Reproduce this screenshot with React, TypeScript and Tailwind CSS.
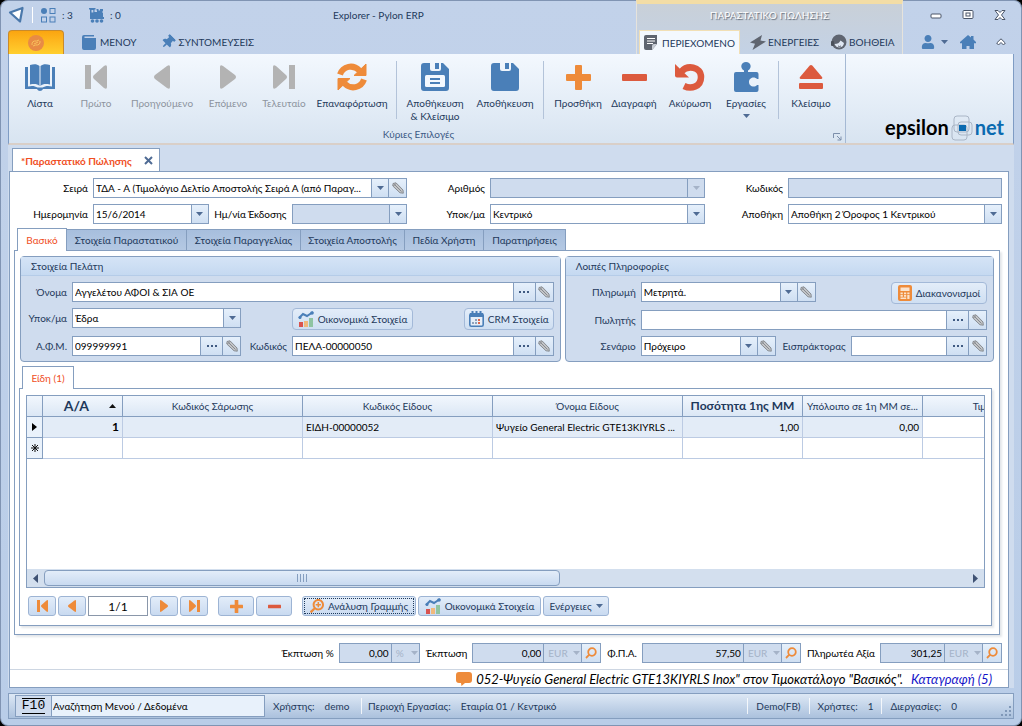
import React from 'react';
import { FaSearchPlus, FaThumbtack, FaUser } from 'react-icons/fa';

type IconProps = { className?: string };

const BookIcon = () => (
  <svg width="30" height="27" viewBox="0 0 30 27" fill="#4a7fb8">
    <path d="M5 1c4-1 7-1 9.500 1v20c-2-2-5-2.500-9.500-1.500zM25 1c-4-1-7-1-9.500 1v20c2-2 5-2.500 9.500-1.500z" />
    <path d="M0 3h3v19.500c4-1 7-.5 9.500 1h5c2.500-1.500 5.500-2 9.500-1V3h3v22H18c-1 2.500-5 2.500-6 0H0z" />
  </svg>
);

const FirstIcon = () => (
  <svg width="22" height="24" viewBox="0 0 22 24" fill="currentColor">
    <path d="M0 0h6v24H0zM22 2v20q0 3-3 1L9 14q-2-2 0-4L19 1q3-2 3 1z" />
  </svg>
);

const PrevIcon = () => (
  <svg width="16" height="24" viewBox="0 0 16 24" fill="currentColor">
    <path d="M16 2v20q0 3-3 1L1 14q-2-2 0-4L13 1q3-2 3 1z" />
  </svg>
);

const NextIcon = () => (
  <svg width="16" height="24" viewBox="0 0 16 24" fill="currentColor">
    <path d="M0 2v20q0 3 3 1l12-9q2-2 0-4L3 1Q0-1 0 2z" />
  </svg>
);

const LastIcon = () => (
  <svg width="22" height="24" viewBox="0 0 22 24" fill="currentColor">
    <path d="M16 0h6v24h-6zM0 2v20q0 3 3 1l10-9q2-2 0-4L3 1Q0-1 0 2z" />
  </svg>
);

const RefreshIcon = () => (
  <svg width="30" height="28" viewBox="0 0 30 28">
    <path d="M3 11.500C6 3 16 1 22.500 7.500M27 16.500C24 25 14 27 7.500 20.500" fill="none" stroke="#ee8b3a" strokeWidth="6" />
    <path d="M29 1v11.500H17zM1 27V15.500h12z" fill="#ee8b3a" stroke="#ee8b3a" strokeLinejoin="round" />
  </svg>
);

const SaveIcon = ({ lines = false }: { lines?: boolean }) => (
  <svg width="28" height="28" viewBox="0 0 28 28" fill="#4a7fb8">
    <path fillRule="evenodd" d="M3 0h6v6q0 2 2 2h7q2 0 2-2V0h2l6 6v19q0 3-3 3H3q-3 0-3-3V3Q0 0 3 0zM14 0h4v6h-4z" />
    {lines && (
      <>
        <rect x="4" y="12" width="20" height="12" rx="1.500" fill="#f3f8fe" />
        <path d="M9 15h10v2H9zM9 19h10v2H9z" />
      </>
    )}
  </svg>
);

const PlusIcon = ({ className }: IconProps) => (
  <svg className={className} viewBox="0 0 25 25" fill="#ee8b3a">
    <rect x="9" width="7" height="25" rx="1" />
    <rect y="9" width="25" height="7" rx="1" />
  </svg>
);

const MinusIcon = ({ className }: IconProps) => (
  <svg className={className} viewBox="0 0 25 25" fill="#dc5a3e">
    <rect y="9" width="25" height="7" rx="1" />
  </svg>
);

const UndoIcon = () => (
  <svg width="30" height="28" viewBox="0 0 30 28">
    <path d="M6.500 8.500C12 2 26 3 26 14c0 10-10 12.500-17 9" fill="none" stroke="#dc5a3e" strokeWidth="6.500" />
    <path d="M0 1l14 13.500H2q-2 0-2-2z" fill="#dc5a3e" />
  </svg>
);

const PuzzleIcon = () => (
  <svg width="25" height="30" viewBox="0 0 25 30" fill="#4a7fb8">
    <path d="M10 10V8.500C5.500 6 7 0 12 0s6.500 6 2 8.500V10h8.500q2 0 2 2v5h-1.500c-2.500-3-8-1.500-8 3s5.500 6 8 3h1.500v5q0 2-2 2H2q-2 0-2-2V12q0-2 2-2z" />
  </svg>
);

const EjectIcon = () => (
  <svg width="24" height="24" viewBox="0 0 24 24" fill="#dc5a3e">
    <path d="M10.500.8q1.500-1.500 3 0L23 12q1 2-1 2H2q-2 0-1-2z" />
    <rect y="18" width="24" height="6" rx="1" />
  </svg>
);

const PencilIcon = () => (
  <svg width="12" height="12" viewBox="0 0 12 12">
    <path d="M1 1.500L4 .8l7 7.200.3 3.200L8 10.800.8 4z" fill="#c3c5c8" stroke="#777b80" strokeWidth="0.800" />
    <path d="M2.500 2.500l7 7M1.500 4L4 1.500" stroke="#777b80" strokeWidth="0.800" />
  </svg>
);

const ChartIcon = () => (
  <svg width="16" height="16" viewBox="0 0 16 16">
    <path d="M1 11h4v5H1z" fill="#d9534f" />
    <path d="M6 10h4v6H6z" fill="#f0b97d" />
    <path d="M11 7h4v9h-4z" fill="#8fc4a2" />
    <path d="M1 7l4-4 4 2 6-4" fill="none" stroke="#4a7fb8" strokeWidth="2" />
    <circle cx="2" cy="6.500" r="1.500" fill="#4a7fb8" />
    <circle cx="14" cy="2" r="1.800" fill="#4a7fb8" />
  </svg>
);

const CalendarIcon = () => (
  <svg width="15" height="16" viewBox="0 0 15 16">
    <rect x=".8" y="2.800" width="13.400" height="12.400" rx="1.500" fill="#e6eef8" stroke="#4a7fb8" strokeWidth="1.600" />
    <path d="M1 2h13v4H1zM2.500 0h2v3h-2zM6.500 0h2v3h-2zM10.500 0h2v3h-2z" fill="#4a7fb8" />
    <path d="M6 8h2v2H6zM3 11h2v2H3zM6 11h2v2H6z" fill="#8fa3bd" />
    <path d="M9 8h2v2H9zM9 11h2v2H9z" fill="#e0674a" />
  </svg>
);

const CalculatorIcon = () => (
  <svg width="14" height="16" viewBox="0 0 14 16">
    <rect width="14" height="16" rx="2" fill="#ee8b3a" />
    <path d="M2.500 2.500h9V6h-9zM2.500 7.500h2.300v1.700H2.500zM6 7.500h2.200v1.700H6zM9.300 7.500h2.200v1.700H9.300zM2.500 10h2.300v1.700H2.500zM6 10h2.200v1.700H6zM9.300 10h2.200v4H9.300zM2.500 12.500h5.700V14H2.500z" fill="#fbe3cd" />
  </svg>
);

const HomeIcon = () => (
  <svg width="16" height="14" viewBox="0 0 16 14" fill="#4a7fb8">
    <path d="M8 0l3 2.600V1h2.500v3.500L16 7v1.200h-2V14H9.500v-3h-3v3H2V8.200H0V7z" />
  </svg>
);

const SpeechIcon = () => (
  <svg width="16" height="14" viewBox="0 0 16 14" className="mr-1 shrink-0" fill="#ee8b3a">
    <path d="M3 0h10q3 0 3 3v5q0 3-3 3H9l-3.500 3L5 11H3q-3 0-3-3V3q0-3 3-3z" />
  </svg>
);

const TrainIcon = () => (
  <svg width="15" height="15" viewBox="0 0 15 15" fill="#4a7fb8">
    <path fillRule="evenodd" d="M0 0h6.500v1.500h-1V4H8V2.500H7.500V1h2v1.500H11V1h3v2h-.5v2H14v4h1v2H1V1.500H0zM2.500 2v2.500h1.800V2z" />
    <circle cx="3.500" cy="13" r="1.800" />
    <circle cx="8" cy="13" r="1.800" />
    <circle cx="12.500" cy="13" r="1.800" />
  </svg>
);

const PageIcon = () => (
  <svg width="14" height="15" viewBox="0 0 14 15" fill="#5f6570">
    <path d="M2 0h11v9l-5 6H2q-2 0-2-2V2q0-2 2-2z" />
    <path d="M3 3.500h8M3 6h8M3 8.500h6" stroke="#fff" />
    <path d="M8 15v-4q0-2 2-2h3z" fill="#c9ced6" />
  </svg>
);

const BoltIcon = () => (
  <svg width="16" height="15" viewBox="0 0 16 15" fill="#5f6570">
    <path d="M12 0L0 7.500l5 1.300L2.500 15 16 6.500l-5.500-1z" />
  </svg>
);

const HelpIcon = () => (
  <svg width="16" height="16" viewBox="0 0 16 16">
    <circle cx="8" cy="8" r="7.500" fill="#5f6570" />
    <path d="M3.500 10q4.500 0 6-3.500l3.500 2.500q-.5 4-4.500 4.500-3.500 0-5-3.500z" fill="#dfe7f2" />
    <path d="M7 12q1.500 1 3 0" stroke="#5f6570" fill="none" />
    <rect y="7" width="3" height="5" rx="1" fill="#4b515b" />
  </svg>
);

const Caret = ({ className = 'text-[#4f6b94]' }: IconProps) => (
  <svg className={className} width="7" height="4" viewBox="0 0 7 4" fill="currentColor">
    <path d="M0 0h7L3.500 4z" />
  </svg>
);

/* ---------- form controls ---------- */

const fieldBox = 'flex h-5 min-w-0 border border-[#859ebf]';

interface FieldProps {
  id: string;
  value?: string;
  readOnly?: boolean;
  disabled?: boolean;
  className?: string;
  pencil?: boolean;
}

const EditButton = () => (
  <button type="button" aria-label="Επεξεργασία" className="flex w-[18px] shrink-0 items-center justify-center border-l border-[#859ebf] bg-gradient-to-b from-[#e6f0fb] to-[#cfdff2]">
    <PencilIcon />
  </button>
);

const SelectField: React.FC<FieldProps> = ({ id, value = '', readOnly, disabled, className = '', pencil }) => (
  <div className={`${fieldBox} ${readOnly || disabled ? 'bg-[#cfdcee]' : 'bg-white'} ${className}`}>
    <div className="relative flex min-w-0 flex-1">
      <select id={id} disabled={disabled} className="w-full appearance-none truncate bg-transparent pl-0.5 pr-5 text-black outline-none">
        <option>{value}</option>
      </select>
      <span className={`pointer-events-none absolute inset-y-0 right-0 flex w-[17px] items-center justify-center border-l border-[#859ebf] ${disabled ? '' : 'bg-gradient-to-b from-[#e6f0fb] to-[#cfdff2]'}`}>
        <Caret className={disabled ? 'text-[#a5b3c8]' : 'text-[#4f6b94]'} />
      </span>
    </div>
    {pencil && <EditButton />}
  </div>
);

const LookupField: React.FC<FieldProps> = ({ id, value = '', className = '' }) => (
  <div className={`${fieldBox} bg-white ${className}`}>
    <input id={id} defaultValue={value} className="w-full min-w-0 flex-1 px-0.5 text-black outline-none" />
    <button type="button" aria-label="Αναζήτηση" className="flex w-[22px] shrink-0 items-center justify-center gap-0.5 border-l border-[#859ebf] bg-gradient-to-b from-[#e6f0fb] to-[#cfdff2]">
      <i className="size-0.5 bg-[#3f5a82]" />
      <i className="size-0.5 bg-[#3f5a82]" />
      <i className="size-0.5 bg-[#3f5a82]" />
    </button>
    <EditButton />
  </div>
);

const Label = ({ htmlFor, children, className = '' }: { htmlFor: string; children: React.ReactNode; className?: string }) => (
  <label htmlFor={htmlFor} className={`flex h-5 shrink-0 items-center justify-end whitespace-nowrap pr-[5px] ${className}`}>
    {children}
  </label>
);

const PanelButton = ({ icon, children, className = '' }: { icon: React.ReactNode; children: React.ReactNode; className?: string }) => (
  <button type="button" className={`flex h-[22px] shrink-0 items-center justify-center gap-1 whitespace-nowrap rounded-sm border border-[#a3b9d8] bg-gradient-to-b from-[#e3edf9] to-[#cfdff2] ${className}`}>
    {icon}
    {children}
  </button>
);

/* ---------- ribbon ---------- */

interface RibbonButtonProps {
  icon: React.ReactNode;
  label: React.ReactNode;
  width: string;
  disabled?: boolean;
  menu?: boolean;
}

const RibbonButton: React.FC<RibbonButtonProps> = ({ icon, label, width, disabled, menu }) => (
  <button type="button" disabled={disabled} className={`flex shrink-0 flex-col items-center whitespace-nowrap leading-[13px] ${width} ${disabled ? 'text-[#8d949e]' : ''}`}>
    <span className={`flex h-8 items-center ${disabled ? 'text-[#b3b3b3]' : ''}`}>{icon}</span>
    <span className="mt-1">{label}</span>
    {menu && <Caret className="mt-1 text-[#4f6b94]" />}
  </button>
);

const Separator = () => <div className="h-[58px] w-px shrink-0 bg-[#b3c3d9]" />;

const Ribbon = () => (
  <div className="flex h-[91px] overflow-hidden border-x border-b-2 border-x-[#7f9cc4] border-b-[#d9cfc8] bg-gradient-to-b from-[#f3f8fe] to-[#d8e4f1]">
    <div className="flex shrink-0 flex-col border-r border-[#a5b9d4] pl-[3px]">
      <div className="flex h-[73px] items-start pt-[7px]">
        <RibbonButton width="w-14" icon={<BookIcon />} label="Λίστα" />
        <RibbonButton width="w-14" icon={<FirstIcon />} label="Πρώτο" disabled />
        <RibbonButton width="w-19" icon={<PrevIcon />} label="Προηγούμενο" disabled />
        <RibbonButton width="w-14" icon={<NextIcon />} label="Επόμενο" disabled />
        <RibbonButton width="w-14" icon={<LastIcon />} label="Τελευταίο" disabled />
        <RibbonButton width="w-20" icon={<RefreshIcon />} label="Επαναφόρτωση" />
        <div className="w-1" />
        <Separator />
        <RibbonButton width="w-19" icon={<SaveIcon lines />} label={<>Αποθήκευση<br />&amp; Κλείσιμο</>} />
        <RibbonButton width="w-16" icon={<SaveIcon />} label="Αποθήκευση" />
        <div className="w-1.5" />
        <Separator />
        <div className="w-1.5" />
        <RibbonButton width="w-14" icon={<PlusIcon className="size-[25px]" />} label="Προσθήκη" />
        <RibbonButton width="w-14" icon={<MinusIcon className="size-[25px]" />} label="Διαγραφή" />
        <RibbonButton width="w-14" icon={<UndoIcon />} label="Ακύρωση" />
        <RibbonButton width="w-14" icon={<PuzzleIcon />} label="Εργασίες" menu />
        <div className="w-1" />
        <Separator />
        <div className="w-1" />
        <RibbonButton width="w-14" icon={<EjectIcon />} label="Κλείσιμο" />
        <div className="w-1.5" />
      </div>
      <div className="flex items-center text-[#3d5a85]">
        <span className="flex-1 pr-2 text-center">Κύριες Επιλογές</span>
        <svg width="12" height="9" viewBox="0 0 12 9" className="mt-1" fill="none" stroke="#7c8fab">
          <path d="M.5 6V1.500H7M4 4l4 4M8 4.500V8H4.500" />
        </svg>
      </div>
    </div>
    <div className="flex flex-1 items-end justify-end pb-0.5 pr-[9px] text-xl font-bold">
      <span className="text-black">epsilon</span>
      <svg width="22" height="26" viewBox="0 0 22 26" fill="none" stroke="#aab6c6" className="mx-0.5">
        <rect x="3" y="1" width="15" height="16" rx="3" />
        <rect x="1" y="10" width="15" height="15" rx="3" />
        <rect x="7" y="7" width="14" height="13" rx="3" />
        <rect x="8" y="10" width="7" height="6" fill="#0a6ab0" stroke="none" />
      </svg>
      <span className="text-[#0a6ab0]">net</span>
    </div>
  </div>
);

const Header = () => (
  <header className="flex h-[54px] shrink-0">
    <div className="flex min-w-0 flex-1 flex-col">
      <div className="flex h-[30px] items-center">
        <svg width="18" height="18" viewBox="0 0 18 18" className="shrink-0">
          <path d="M2 6.500L14.500 2l-2.500 13.500z" fill="#fff" stroke="#4a78ab" strokeWidth="2.200" strokeLinejoin="round" />
        </svg>
        <div className="ml-1.5 mr-2 h-4 w-px bg-white" />
        <svg width="15" height="15" viewBox="0 0 15 15" className="shrink-0" fill="none" stroke="#4a7fb8">
          <circle cx="3" cy="3" r="3" fill="#4a7fb8" stroke="none" />
          <rect x="9" y=".5" width="5" height="5" />
          <rect x=".5" y="9" width="5" height="5" />
          <rect x="9" y="9" width="5" height="5" />
        </svg>
        <span className="ml-1.5 mr-4">: 3</span>
        <TrainIcon />
        <span className="ml-1.5">: 0</span>
        <h1 className="flex-1 text-center">Explorer - Pylon ERP</h1>
      </div>
      <nav className="flex h-6 items-stretch">
        <button type="button" aria-label="Pylon" className="flex w-14 items-center justify-center rounded-t-sm border border-b-0 border-[#c98a2b] bg-gradient-to-b from-[#fba50f] to-[#ffcf2e]">
          <svg width="16" height="16" viewBox="0 0 16 16">
            <circle cx="8" cy="8" r="8" fill="#e88b45" />
            <path d="M4 10q-.5-4.500 4.500-4L11 5M12 6q.5 4.500-4.500 4L5 11M6 9l4-2" stroke="#f8c25c" fill="none" />
          </svg>
        </button>
        <button type="button" className="ml-[18px] flex items-center gap-1">
          <svg width="14" height="15" viewBox="0 0 14 15" fill="#4a7fb8">
            <path d="M2 0h10v1.500H2.500V3H14v10q0 2-2 2H2q-2 0-2-2V2q0-2 2-2z" />
          </svg>
          ΜΕΝΟΥ
        </button>
        <button type="button" className="ml-6 flex items-center gap-1">
          <FaThumbtack size={14} color="#4a7fb8" className="rotate-45" />
          ΣΥΝΤΟΜΕΥΣΕΙΣ
        </button>
      </nav>
    </div>

    <div className="flex w-[267px] shrink-0 flex-col border-x border-t-4 border-x-[#e6e3dc] border-t-[#f3dda6] bg-gradient-to-b from-[#c9d0d8] to-[#c3d2e6]">
      <div className="flex h-[26px] items-center justify-center pb-1 text-white [text-shadow:1px_1px_1px_#5d6876]">ΠΑΡΑΣΤΑΤΙΚΟ ΠΩΛΗΣΗΣ</div>
      <nav className="flex h-6 items-stretch pl-0.5">
        <button type="button" className="flex w-[101px] items-center justify-center gap-1 border border-b-0 border-[#f1dfb5] bg-[#f3f8fe]">
          <PageIcon />
          ΠΕΡΙΕΧΟΜΕΝΟ
        </button>
        <button type="button" className="ml-2.5 flex items-center gap-0.5"><BoltIcon />ΕΝΕΡΓΕΙΕΣ</button>
        <button type="button" className="ml-3 flex items-center gap-0.5"><HelpIcon />ΒΟΗΘΕΙΑ</button>
      </nav>
    </div>

    <div className="flex w-[111px] shrink-0 flex-col">
      <div className="flex h-[30px] items-center justify-end gap-5 pr-2">
        <button type="button" aria-label="Ελαχιστοποίηση">
          <svg width="12" height="12" viewBox="0 0 12 12"><rect x="1" y="5" width="10" height="4" rx="1" fill="#fff" stroke="#4a5568" /></svg>
        </button>
        <button type="button" aria-label="Επαναφορά">
          <svg width="12" height="12" viewBox="0 0 12 12" fill="#fff" stroke="#4a5568"><rect x="1" y="1.500" width="10" height="8" rx="1" /><rect x="4" y="4" width="4" height="3" /></svg>
        </button>
        <button type="button" aria-label="Κλείσιμο παραθύρου">
          <svg width="12" height="12" viewBox="0 0 12 12"><path d="M1 1.500h3l2 2 2-2h3L7.500 6l3.500 4.500H8l-2-2-2 2H1L4.500 6z" fill="#fff" stroke="#4a5568" /></svg>
        </button>
      </div>
      <div className="flex h-6 items-center justify-end pr-2">
        <button type="button" aria-label="Χρήστης" className="flex items-center gap-1.5"><FaUser size={14} color="#4a7fb8" /><Caret /></button>
        <button type="button" aria-label="Αρχική" className="ml-3"><HomeIcon /></button>
        <button type="button" aria-label="Σύμπτυξη" className="ml-5">
          <svg width="10" height="8" viewBox="0 0 10 8"><path d="M5 .8L9.300 5 7.500 7 5 4.500 2.500 7 .7 5z" fill="#fff" stroke="#4a5568" /></svg>
        </button>
      </div>
    </div>
  </header>
);

/* ---------- document ---------- */

const tabs = [
  { label: 'Στοιχεία Παραστατικού', width: 'w-[120px]' },
  { label: 'Στοιχεία Παραγγελίας', width: 'w-[114px]' },
  { label: 'Στοιχεία Αποστολής', width: 'w-[104px]' },
  { label: 'Πεδία Χρήστη', width: 'w-[79px]' },
  { label: 'Παρατηρήσεις', width: 'w-[82px]' },
];

const HeaderFields = () => (
  <div className="grid grid-cols-[83px_314fr_83px_215fr_83px_214fr] gap-y-1.5 pr-1.5 pt-1.5 text-black">
    <Label htmlFor="series">Σειρά</Label>
    <SelectField id="series" value="ΤΔΑ - Α (Τιμολόγιο Δελτίο Αποστολής Σειρά Α (από Παραγ..." pencil />
    <Label htmlFor="number">Αριθμός</Label>
    <SelectField id="number" disabled />
    <Label htmlFor="code">Κωδικός</Label>
    <input id="code" readOnly className="h-5 w-full min-w-0 border border-[#859ebf] bg-[#cfdcee] px-0.5" />

    <Label htmlFor="date">Ημερομηνία</Label>
    <div className="flex min-w-0">
      <SelectField id="date" value="15/6/2014" className="flex-1" />
      <Label htmlFor="issued" className="w-[83px]">Ημ/νία Έκδοσης</Label>
      <SelectField id="issued" readOnly className="flex-1" />
    </div>
    <Label htmlFor="branch">Υποκ/μα</Label>
    <SelectField id="branch" value="Κεντρικό" />
    <Label htmlFor="store">Αποθήκη</Label>
    <SelectField id="store" value="Αποθήκη 2 Όροφος 1 Κεντρικού" />
  </div>
);

const Group = ({ title, grow, children }: { title: string; grow: string; children: React.ReactNode }) => (
  <section className={`min-w-0 basis-0 rounded-sm border border-[#859ebf] bg-[#cfdcee] ${grow}`}>
    <h2 className="flex h-[19px] items-center border-b border-[#b5cce8] bg-gradient-to-b from-[#d5e4f6] to-[#c5d9f1] pl-2.5">{title}</h2>
    <div className="flex flex-col gap-1.5 py-[5px] pr-1.5 pt-1.5">{children}</div>
  </section>
);

const CustomerGroup = () => (
  <Group title="Στοιχεία Πελάτη" grow="grow-[541]">
    <div className="flex">
      <Label htmlFor="name" className="w-[51px]">Όνομα</Label>
      <LookupField id="name" value="Αγγελέτου ΑΦΟΙ & ΣΙΑ ΟΕ" className="flex-1" />
    </div>
    <div className="flex h-[22px]">
      <Label htmlFor="customer-branch" className="w-[51px]">Υποκ/μα</Label>
      <SelectField id="customer-branch" value="Έδρα" className="w-[169px]" />
      <PanelButton icon={<ChartIcon />} className="ml-[51px] w-[121px]">Οικονομικά Στοιχεία</PanelButton>
      <PanelButton icon={<CalendarIcon />} className="ml-auto w-[90px]">CRM Στοιχεία</PanelButton>
    </div>
    <div className="flex">
      <Label htmlFor="vat" className="w-[51px]">Α.Φ.Μ.</Label>
      <LookupField id="vat" value="099999991" className="w-[169px]" />
      <Label htmlFor="customer-code" className="w-[51px]">Κωδικός</Label>
      <LookupField id="customer-code" value="ΠΕΛΑ-00000050" className="flex-1" />
    </div>
  </Group>
);

const OtherGroup = () => (
  <Group title="Λοιπές Πληροφορίες" grow="grow-[429]">
    <div className="flex h-[22px]">
      <Label htmlFor="payment" className="w-[75px]">Πληρωμή</Label>
      <SelectField id="payment" value="Μετρητά." pencil className="w-[175px]" />
      <PanelButton icon={<CalculatorIcon />} className="ml-auto w-24">Διακανονισμοί</PanelButton>
    </div>
    <div className="flex">
      <Label htmlFor="seller" className="w-[75px]">Πωλητής</Label>
      <LookupField id="seller" className="flex-1" />
    </div>
    <div className="flex">
      <Label htmlFor="scenario" className="w-[75px]">Σενάριο</Label>
      <SelectField id="scenario" value="Πρόχειρο" pencil className="w-[135px]" />
      <Label htmlFor="collector" className="w-[75px]">Εισπράκτορας</Label>
      <LookupField id="collector" className="flex-1" />
    </div>
  </Group>
);

const ItemsTable = () => {
  const th = 'h-[21px] border-b border-r border-[#859ebf] bg-gradient-to-b from-[#f2f7fd] to-[#dbe7f5] p-0 text-center font-normal whitespace-nowrap';
  const td = 'h-[21px] border-b border-r border-[#bccbe3] px-[3px] py-0 whitespace-nowrap';
  return (
    <table className="w-[1016px] table-fixed border-separate border-spacing-0">
      <colgroup>
        <col className="w-4" />
        <col className="w-20" />
        <col className="w-[180px]" />
        <col className="w-[190px]" />
        <col className="w-[190px]" />
        <col className="w-[120px]" />
        <col className="w-[120px]" />
        <col className="w-[120px]" />
      </colgroup>
      <thead>
        <tr>
          <th className={th}></th>
          <th className={th}>
            <span className="flex items-center justify-end gap-5 pr-1.5 text-sm font-bold leading-4">
              Α/Α
              <svg width="7" height="4" viewBox="0 0 7 4"><path d="M0 4h7L3.500 0z" fill="#111" /></svg>
            </span>
          </th>
          <th className={th}>Κωδικός Σάρωσης</th>
          <th className={th}>Κωδικός Είδους</th>
          <th className={th}>Όνομα Είδους</th>
          <th className={`${th} text-xs`}><b>Ποσότητα 1ης ΜΜ</b></th>
          <th className={th}>Υπόλοιπο σε 1η ΜΜ σε...</th>
          <th className={th}>Τιμή</th>
        </tr>
      </thead>
      <tbody className="text-black">
        <tr className="bg-[#e3ecf7]">
          <td className="border-b border-r border-[#859ebf] bg-[#eaf2fb] p-0">
            <svg width="5" height="8" viewBox="0 0 5 8" className="mx-auto"><path d="M0 0l5 4-5 4z" /></svg>
          </td>
          <td className={`${td} text-right text-xs font-bold`}>1</td>
          <td className={td}></td>
          <td className={td}>ΕΙΔΗ-00000052</td>
          <td className={td}>Ψυγείο General Electric GTE13KIYRLS ...</td>
          <td className={`${td} text-right`}>1,00</td>
          <td className={`${td} text-right`}>0,00</td>
          <td className={`${td} bg-white`}></td>
        </tr>
        <tr>
          <td className="h-[21px] border-b border-r border-[#859ebf] bg-[#eaf2fb] p-0">
            <svg width="8" height="8" viewBox="0 0 8 8" className="mx-auto" stroke="#111"><path d="M4 0v8M0 4h8M1 1l6 6M7 1L1 7" /></svg>
          </td>
          {[...Array(7)].map((_, i) => (
            <td key={i} className={td}></td>
          ))}
        </tr>
      </tbody>
    </table>
  );
};

const Scrollbar = () => (
  <div className="flex h-[18px] shrink-0 items-stretch bg-[#d3dfee]">
    <button type="button" aria-label="Κύλιση αριστερά" className="flex w-[17px] items-center justify-center">
      <svg width="5" height="9" viewBox="0 0 5 9"><path d="M5 0v9L0 4.500z" fill="#3f5274" /></svg>
    </button>
    <div className="flex-1">
      <div className="my-px flex h-4 w-[56%] items-center justify-center gap-px rounded-sm border border-[#859ebf] bg-gradient-to-b from-[#e3edf9] to-[#c9daf0]">
        {[0, 1, 2, 3].map((i) => (
          <i key={i} className="mr-px h-2 w-px bg-[#859ebf]" />
        ))}
      </div>
    </div>
    <button type="button" aria-label="Κύλιση δεξιά" className="flex w-[18px] items-center justify-center">
      <svg width="5" height="9" viewBox="0 0 5 9"><path d="M0 0v9l5-4.500z" fill="#3f5274" /></svg>
    </button>
  </div>
);

const toolButton = 'flex h-5 shrink-0 items-center justify-center gap-1 whitespace-nowrap rounded-[3px] border border-[#9db4d4] bg-gradient-to-b from-[#e3edf9] to-[#c9daf0] text-[#1e395b]';

const arrowButton = 'flex h-5 w-7 shrink-0 items-center justify-center rounded-[3px] border border-[#9db4d4] bg-gradient-to-b from-[#e3edf9] to-[#c9daf0] text-[#ee8b3a] [&>svg]:h-3 [&>svg]:w-auto';

const GridToolbar = () => (
  <div className="mt-2 flex gap-0.5 pl-0.5">
    <button type="button" aria-label="Πρώτη" className={arrowButton}><FirstIcon /></button>
    <button type="button" aria-label="Προηγούμενη" className={arrowButton}><PrevIcon /></button>
    <input aria-label="Εγγραφή" defaultValue="1/1" className="h-5 w-15 border border-[#8a97aa] bg-white text-center text-xs text-black" />
    <button type="button" aria-label="Επόμενη" className={arrowButton}><NextIcon /></button>
    <button type="button" aria-label="Τελευταία" className={arrowButton}><LastIcon /></button>
    <button type="button" aria-label="Προσθήκη γραμμής" className={`${toolButton} ml-2 w-9`}><PlusIcon className="size-[13px]" /></button>
    <button type="button" aria-label="Διαγραφή γραμμής" className={`${toolButton} w-9`}><MinusIcon className="size-[13px]" /></button>
    <button type="button" className={`${toolButton} ml-2 w-[114px] p-px`}>
      <span className="flex h-full w-full items-center justify-center gap-1 border border-dotted border-[#1e395b]">
        <FaSearchPlus size={14} color="#ee8b3a" className="-scale-x-100" />
        Ανάλυση Γραμμής
      </span>
    </button>
    <button type="button" className={`${toolButton} w-[123px]`}><ChartIcon />Οικονομικά Στοιχεία</button>
    <button type="button" className={`${toolButton} w-[66px]`}>Ενέργειες<Caret /></button>
  </div>
);

interface TotalProps {
  id: string;
  label: string;
  value: string;
  unit: string;
  unitWidth: string;
  width: string;
  lens?: boolean;
}

const Total: React.FC<TotalProps> = ({ id, label, value, unit, unitWidth, width, lens }) => (
  <div className="flex">
    <Label htmlFor={id}>{label}</Label>
    <div className={`${fieldBox} bg-[#cfdcee] ${width}`}>
      <input id={id} readOnly defaultValue={value} className="w-full min-w-0 flex-1 px-0.5 text-right text-black" />
      <span className={`flex shrink-0 items-center justify-between border-l border-[#859ebf] pl-1 pr-px text-[#a5b3c8] ${unitWidth}`}>
        {unit}
        <Caret className="text-[#a5b3c8]" />
      </span>
      {lens && (
        <button type="button" aria-label={`Ανάλυση ${label}`} className="flex w-[19px] shrink-0 items-center justify-center border-l border-[#859ebf] bg-gradient-to-b from-[#e6f0fb] to-[#cfdff2]">
          <svg width="12" height="12" viewBox="0 0 12 12" fill="none" stroke="#ee8b3a" strokeWidth="1.800">
            <circle cx="7" cy="5" r="3.800" />
            <path d="M4.300 7.700L1 11" />
          </svg>
        </button>
      )}
    </div>
  </div>
);

const Document = () => (
  <main className="flex flex-1 flex-col bg-[#cfdcee] pl-px pr-[5px]">
    <div className="ml-[3px] flex h-[26px] items-end">
      <button type="button" className="-mb-px flex h-6 w-[148px] items-center justify-between whitespace-nowrap border border-b-0 border-[#859ebf] bg-white pl-2 pr-1.5 font-bold text-[#f04e23]">
        *Παραστατικό Πώλησης
        <svg width="9" height="9" viewBox="0 0 9 9" stroke="#4f6b94" strokeWidth="2"><path d="M1 1l7 7M8 1L1 8" /></svg>
      </button>
    </div>
    <div className="flex flex-1 flex-col border border-[#859ebf] bg-white">
      <HeaderFields />

      <nav className="ml-[7px] mt-1 flex h-[22px] items-end">
        <button type="button" className="relative -mb-px h-[23px] w-[50px] border border-b-0 border-[#859ebf] bg-white text-[#f04e23]">Βασικό</button>
        {tabs.map((t) => (
          <button key={t.label} type="button" className={`h-[21px] shrink-0 whitespace-nowrap border border-b-0 border-l-0 border-[#859ebf] bg-gradient-to-b from-[#a7bedd] to-[#b4c8e3] ${t.width}`}>
            {t.label}
          </button>
        ))}
      </nav>

      <div className="ml-1 mr-2 flex flex-1 flex-col border border-[#859ebf] px-[5px] pb-2 pt-[5px] shadow-[2px_2px_2px_#e3e6ea]">
        <div className="flex gap-1">
          <CustomerGroup />
          <OtherGroup />
        </div>
        <div className="ml-0.5 mt-1 flex h-[22px]">
          <button type="button" className="relative h-[23px] w-[52px] border border-b-0 border-[#859ebf] bg-white text-[#f04e23]">Είδη (1)</button>
        </div>
        <div className="-ml-px mr-0.5 flex flex-1 flex-col border border-[#859ebf] px-1.5 pb-[9px] pt-1.5 shadow-[2px_2px_2px_#e3e6ea]">
          <div className="flex flex-1 flex-col border border-[#859ebf]">
            <div className="w-0 min-w-full flex-1 overflow-hidden">
              <ItemsTable />
            </div>
            <Scrollbar />
          </div>
          <GridToolbar />
        </div>
      </div>

      <div className="mt-2 flex justify-end gap-1.5 pb-1.5 pr-1.5 text-black">
        <Total id="discount-pct" label="Έκπτωση %" value="0,00" unit="%" unitWidth="w-7" width="w-[81px]" />
        <Total id="discount" label="Έκπτωση" value="0,00" unit="EUR" unitWidth="w-[38px]" width="w-[129px]" lens />
        <Total id="vat-total" label="Φ.Π.Α." value="57,50" unit="EUR" unitWidth="w-[38px]" width="w-[159px]" lens />
        <Total id="payable" label="Πληρωτέα Αξία" value="301,25" unit="EUR" unitWidth="w-[38px]" width="w-[122px]" lens />
      </div>
      <div className="flex h-[18px] items-center justify-end border-t border-[#cdd6e2] pr-4 text-[13px] italic leading-4">
        <SpeechIcon />
        <span className="whitespace-nowrap text-black">
          052-Ψυγείο General Electric GTE13KIYRLS Inox" στον Τιμοκατάλογο "Βασικός".
        </span>
        <a href="#log" className="ml-2 whitespace-nowrap text-[#1414c8]">Καταγραφή (5)</a>
      </div>
    </div>
  </main>
);

const StatusDivider = () => <div className="my-1 w-px bg-white/80" />;

const StatusBar = () => (
  <footer className="mt-[5px] flex h-[26px] shrink-0 border border-[#859ebf] bg-gradient-to-b from-[#dde8f5] to-[#abc1dd]">
    <div className="my-px ml-1.5 flex w-[250px] border border-[#859ebf] bg-[#e8f1fb]">
      <label htmlFor="search" className="flex w-[35px] items-center justify-center bg-[#cfdcee] text-black">
        <span className="border-y border-black font-['Liberation_Mono',monospace] text-[13px] leading-[14px]">F10</span>
      </label>
      <input id="search" defaultValue="Αναζήτηση Μενού / Δεδομένα" className="min-w-0 flex-1 border-l border-[#859ebf] px-px text-black" />
    </div>
    <div className="flex w-24 items-center gap-2.5 pl-2">
      <span>Χρήστης:</span>
      <span>demo</span>
    </div>
    <StatusDivider />
    <div className="flex flex-1 items-center gap-2.5 pl-1.5">
      <span>Περιοχή Εργασίας:</span>
      <span>Εταιρία 01 / Κεντρικό</span>
    </div>
    <StatusDivider />
    <div className="flex items-center px-2">Demo(FB)</div>
    <StatusDivider />
    <div className="flex items-center gap-2.5 px-2"><span>Χρήστες:</span><span>1</span></div>
    <StatusDivider />
    <div className="flex items-center gap-2.5 pl-2 pr-11"><span>Διεργασίες:</span><span>0</span></div>
    <svg width="12" height="12" viewBox="0 0 12 12" className="mt-auto shrink-0" fill="#8098b8">
      <path d="M8 0h2v2H8zM4 4h2v2H4zM8 4h2v2H8zM0 8h2v2H0zM4 8h2v2H4zM8 8h2v2H8z" />
    </svg>
  </footer>
);

const App: React.FC = () => (
  <div className="bg-black">
    <div className="flex min-h-screen flex-col rounded-lg bg-[#bccfe8] bg-gradient-to-b from-[#c2d2ea] to-[#b9cde8] px-2 pb-[7px] font-['Lato','Noto_Sans',sans-serif] text-[10px] leading-[14px] text-[#1e395b] shadow-[inset_0_0_0_1px_#8094b3]">
      <Header />
      <Ribbon />
      <Document />
      <StatusBar />
    </div>
  </div>
);

export default App;
